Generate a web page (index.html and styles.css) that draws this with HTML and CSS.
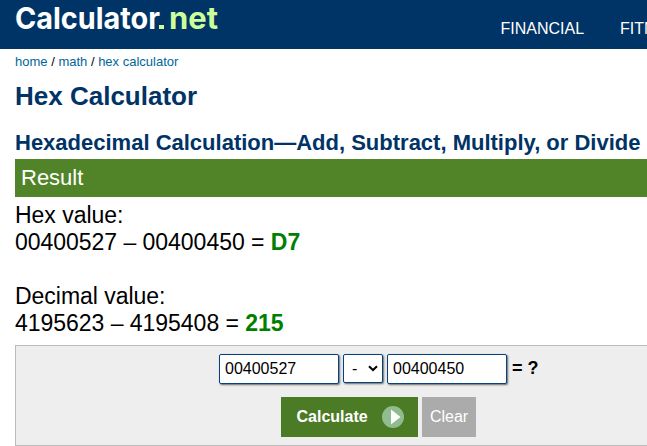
FILE: index.html
```html
<!DOCTYPE html>
<html lang="en">
<head>
<meta charset="utf-8">
<title>Hex Calculator</title>
<link rel="stylesheet" href="styles.css">
</head>
<body>
<header class="header">
  <svg class="logo" width="204" height="36" viewBox="0 0 204 36" role="img" aria-label="Calculator.net">
    <text class="logo-name" x="0" y="29" textLength="145" lengthAdjust="spacingAndGlyphs">Calculator</text>
    <rect class="logo-net" x="144" y="25" width="5" height="4"/>
    <text class="logo-net" x="154" y="29" textLength="49" lengthAdjust="spacingAndGlyphs">net</text>
  </svg>
  <nav class="nav"><a>FINANCIAL</a><a>FITNESS &amp; HEALTH</a></nav>
</header>
<main class="content">
  <div class="crumbs"><a>home</a> / <a>math</a> / <a>hex calculator</a></div>
  <h1>Hex Calculator</h1>
  <h2>Hexadecimal Calculation—Add, Subtract, Multiply, or Divide</h2>
  <div class="result-title">Result</div>
  <div class="result">
    <p>Hex value:<br>00400527 – 00400450 = <b>D7</b></p>
    <p>Decimal value:<br>4195623 – 4195408 = <b>215</b></p>
  </div>
  <form class="panel">
    <div class="fields">
      <input class="field" type="text" value="00400527">
      <div class="field operator"><span>-</span><svg width="10" height="7" viewBox="0 0 10 7"><path d="M1 1.2 5 5 9 1.2"/></svg></div>
      <input class="field" type="text" value="00400450">
      <b class="equals">= ?</b>
    </div>
    <div class="buttons">
      <button class="calculate" type="button">Calculate<svg width="22" height="22" viewBox="0 0 22 22"><circle cx="11" cy="11" r="11"/><path d="M9 3.500v15l9.500-7.500z"/></svg></button>
      <button class="clear" type="button">Clear</button>
    </div>
  </form>
</main>
</body>
</html>
```
FILE: styles.css
```css
* { box-sizing: border-box; }
body {
  margin: 0;
  overflow: hidden;
  background: #fff;
  color: #000;
  font-family: "Liberation Sans", Arial, sans-serif;
}
.header {
  display: flex;
  justify-content: space-between;
  height: 49px;
  padding-left: 15px;
  background: #003366;
}
.logo { flex: none; }
.logo text { font: 700 30px Inter, sans-serif; }
.logo-name { fill: #fff; }
.logo-net { fill: #cf9; }
.nav {
  display: flex;
  flex: none;
  gap: 36px;
  width: 147px;
  padding: 20px 0 0 0.5px;
  overflow: hidden;
  color: #fff;
  font-size: 16px;
  line-height: 18px;
  white-space: nowrap;
}
.content { padding-left: 15px; overflow: hidden; }
.crumbs { padding-top: 5px; font-size: 13px; line-height: 16px; }
.crumbs a { color: #006699; }
h1, h2 { margin: 0; color: #003366; white-space: nowrap; }
h1 { padding-top: 11px; font-size: 26px; line-height: 30px; }
h2 { padding-top: 18px; font-size: 22px; line-height: 28px; height: 48px; }
.result-title {
  height: 38px;
  padding-left: 6px;
  background: #518428;
  color: #fff;
  font-size: 22px;
  line-height: 37px;
}
.result { padding-top: 5px; font-size: 23px; line-height: 27px; letter-spacing: -0.03px; }
.result p { margin: 0 0 27px; }
.result p:last-child { margin-bottom: 8px; }
.result b { color: #008000; }
.panel {
  height: 101px;
  padding-top: 8px;
  background: #eee;
  border: 1px solid #bbb;
  border-right: 0;
}
.fields { display: flex; gap: 4px; padding-left: 203px; }
.field {
  width: 120px;
  height: 30px;
  padding: 0 5px;
  background: #fff;
  border: 1px solid #044284;
  border-radius: 2px;
  box-shadow: 1px 1px 2px #666;
  font: 16px "Liberation Sans", Arial, sans-serif;
}
.operator {
  display: flex;
  align-items: center;
  justify-content: space-between;
  width: 40px;
  height: 29px;
  padding: 0 4px 0 8px;
}
.operator path { fill: none; stroke: #000; stroke-width: 2; }
.equals { padding-left: 1px; font-size: 18px; line-height: 28px; }
.buttons { display: flex; gap: 4px; padding: 13px 0 0 265px; }
.buttons button { height: 40px; padding: 0; border: 0; color: #fff; font: 16px "Liberation Sans", Arial, sans-serif; }
.buttons .calculate {
  display: flex;
  align-items: center;
  gap: 14px;
  width: 137px;
  padding-left: 15.5px;
  background: #4c7b25;
  font-weight: bold;
}
.calculate circle { fill: #90bd8f; }
.calculate path { fill: #fff; }
.buttons .clear { width: 54px; background: #ababab; }
```
